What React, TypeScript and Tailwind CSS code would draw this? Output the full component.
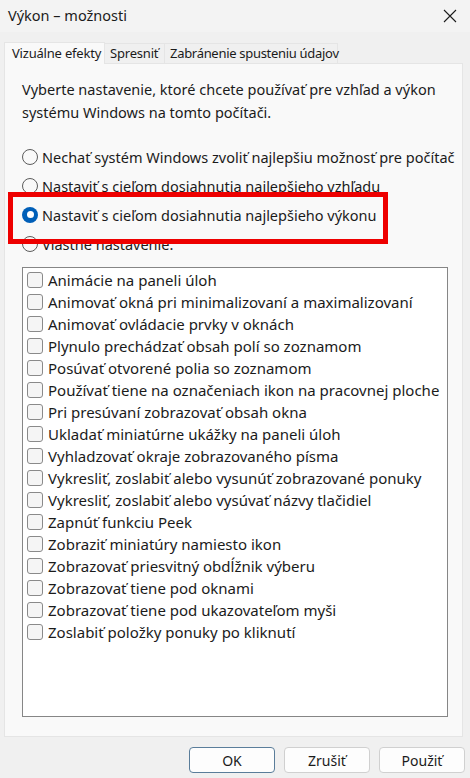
import React from 'react';

const items = [
  'Animácie na paneli úloh',
  'Animovať okná pri minimalizovaní a maximalizovaní',
  'Animovať ovládacie prvky v oknách',
  'Plynulo prechádzať obsah polí so zoznamom',
  'Posúvať otvorené polia so zoznamom',
  'Používať tiene na označeniach ikon na pracovnej ploche',
  'Pri presúvaní zobrazovať obsah okna',
  'Ukladať miniatúrne ukážky na paneli úloh',
  'Vyhladzovať okraje zobrazovaného písma',
  'Vykresliť, zoslabiť alebo vysunúť zobrazované ponuky',
  'Vykresliť, zoslabiť alebo vysúvať názvy tlačidiel',
  'Zapnúť funkciu Peek',
  'Zobraziť miniatúry namiesto ikon',
  'Zobrazovať priesvitný obdĺžnik výberu',
  'Zobrazovať tiene pod oknami',
  'Zobrazovať tiene pod ukazovateľom myši',
  'Zoslabiť položky ponuky po kliknutí',
];

function Radio({ checked, label }: { checked?: boolean; label: string }) {
  return (
    <div className="flex items-center h-[29px] whitespace-nowrap">
      {checked ? (
        <span className="w-[16px] h-[16px] rounded-full bg-[#005fb8] flex items-center justify-center mr-[4px] shrink-0">
          <span className="w-[7px] h-[7px] rounded-full bg-white" />
        </span>
      ) : (
        <span className="w-[16px] h-[16px] rounded-full border border-[#5c5c5c] bg-[#f9f9f9] mr-[4px] shrink-0" />
      )}
      <span className="text-[14.5px] text-[#1b1b1b] leading-[20px]">{label}</span>
    </div>
  );
}

export default function App() {
  return (
    <div className="w-[470px] h-[778px] bg-[#f0f0f0] flex flex-col font-['Noto_Sans',sans-serif] text-[#1b1b1b] overflow-hidden">
      {/* title bar */}
      <div className="h-[32px] flex items-center justify-between pl-[8px] pr-[10px] bg-[#f3f3f3]">
        <span className="text-[14.5px]">Výkon – možnosti</span>
        <svg width="16" height="16" viewBox="0 0 16 16" className="mr-[2px]">
          <path d="M2 2 L14 14 M14 2 L2 14" stroke="#1b1b1b" strokeWidth="1.1" />
        </svg>
      </div>

      {/* tabs */}
      <div className="flex px-[4px] mt-[10px] h-[21px] items-end whitespace-nowrap">
        <div className="w-[101px] h-[22px] pl-[7px] bg-[#f9f9f9] border border-b-0 border-[#e5e5e5] text-[13px] tracking-[-0.2px] leading-[20px] -mb-px relative z-10">
          Vizuálne efekty
        </div>
        <div className="w-[60px] h-[20px] pl-[5px] bg-[#f0f0f0] border border-l-0 border-b-0 border-[#e5e5e5] text-[13px] tracking-[-0.2px] leading-[19px]">
          Spresniť
        </div>
        <div className="w-[173px] h-[20px] pl-[5px] bg-[#f0f0f0] border border-l-0 border-b-0 border-[#e5e5e5] text-[13px] tracking-[-0.3px] leading-[19px]">
          Zabránenie spusteniu údajov
        </div>
      </div>

      {/* panel */}
      <div className="mx-[4px] w-[459px] h-[674px] bg-[#f9f9f9] border border-[#e5e5e5] flex flex-col px-[17px] pt-[14px]">
        <p className="text-[14.5px] leading-[23px] whitespace-nowrap">
          Vyberte nastavenie, ktoré chcete používať pre vzhľad a výkon
          <br />
          systému Windows na tomto počítači.
        </p>

        <div className="mt-[18px] flex flex-col relative">
          <Radio label="Nechať systém Windows zvoliť najlepšiu možnosť pre počítač" />
          <Radio label="Nastaviť s cieľom dosiahnutia najlepšieho vzhľadu" />
          <Radio checked label="Nastaviť s cieľom dosiahnutia najlepšieho výkonu" />
          <Radio label="Vlastné nastavenie:" />
          <div className="absolute left-[-14px] top-[50px] w-[380px] h-[52px] border-[5px] border-[#ee0000]" />
        </div>

        <div className="mt-[9px] w-[426px] h-[450px] bg-white border border-[#868686] pt-[1px] pl-[4px]">
          {items.map((t) => (
            <div key={t} className="flex items-center h-[22px]">
              <span className="w-[16px] h-[16px] rounded-[3px] border border-[#8a8a8a] bg-[#f5f5f5] mr-[5px] shrink-0" />
              <span className="text-[15px] leading-[20px] whitespace-nowrap">{t}</span>
            </div>
          ))}
        </div>
      </div>

      {/* buttons */}
      <div className="flex justify-end gap-[9px] pr-[5px] mt-[10px]">
        <button className="w-[86px] h-[26px] rounded-[4px] bg-[#fdfdfd] border border-[#5a7d9a] text-[14px]">OK</button>
        <button className="w-[86px] h-[26px] rounded-[4px] bg-[#fdfdfd] border border-[#d0d0d0] text-[14px]">Zrušiť</button>
        <button className="w-[86px] h-[26px] rounded-[4px] bg-[#fdfdfd] border border-[#d0d0d0] text-[14px]">Použiť</button>
      </div>
    </div>
  );
}
